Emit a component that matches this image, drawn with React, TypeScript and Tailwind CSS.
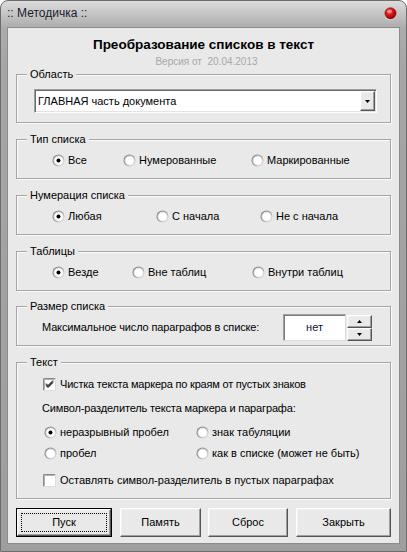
import React, { useId } from "react";

function Radio({ checked }: { checked?: boolean }) {
  const id = useId().replace(/:/g, "");
  return (
    <svg width="13" height="13" viewBox="0 0 13 13" className="shrink-0">
      <defs>
        <linearGradient id={"o" + id} x1="0" y1="0" x2="1" y2="1">
          <stop offset="0" stopColor="#7c7c7c" />
          <stop offset="0.5" stopColor="#9a9a9a" />
          <stop offset="1" stopColor="#f4f4f4" />
        </linearGradient>
        <linearGradient id={"i" + id} x1="0" y1="0" x2="1" y2="1">
          <stop offset="0" stopColor="#c4c4c4" />
          <stop offset="1" stopColor="#ffffff" />
        </linearGradient>
      </defs>
      <circle cx="6.5" cy="6.5" r="6" fill={`url(#o${id})`} />
      <circle cx="6.5" cy="6.5" r="5" fill={`url(#i${id})`} />
      <circle cx="6.5" cy="6.5" r="4" fill="#ffffff" />
      {checked && <circle cx="6.5" cy="6.5" r="2" fill="#000" />}
    </svg>
  );
}

function Check({ checked }: { checked?: boolean }) {
  return (
    <svg width="13" height="13" viewBox="0 0 13 13" className="shrink-0">
      <rect x="0" y="0" width="13" height="13" fill="#ffffff" />
      <path d="M0.5 12.5 V0.5 H12.5" stroke="#8a8a8a" fill="none" />
      <path d="M12.5 0.5 V12.5 H0.5" stroke="#dcdcdc" fill="none" />
      <path d="M1.5 11.5 V1.5 H11.5" stroke="#b0b0b0" fill="none" />
      {checked && (
        <path
          d="M3 5.5 L5 7.5 L10 2.5 M3 6.5 L5 8.5 L10 3.5 M3 7.5 L5 9.5 L10 4.5"
          stroke="#000"
          strokeWidth="1"
          fill="none"
        />
      )}
    </svg>
  );
}

function Option({
  label,
  checked,
  className,
}: {
  label: string;
  checked?: boolean;
  className?: string;
}) {
  return (
    <div className={"flex items-center gap-[3px] h-[14px] " + (className || "")}>
      <Radio checked={checked} />
      <span className="leading-[14px] whitespace-nowrap">{label}</span>
    </div>
  );
}

function Group({
  label,
  className,
  children,
}: {
  label: string;
  className?: string;
  children?: React.ReactNode;
}) {
  return (
    <div
      className={
        "flex flex-col border border-[#a5a5a5] shadow-[inset_1px_1px_0_#fbfbfb,1px_1px_0_#fbfbfb] " +
        (className || "")
      }
    >
      <span className="-mt-[8px] ml-[10px] self-start h-[14px] px-[3px] leading-[14px] bg-[#e9e9e9] whitespace-nowrap">
        {label}
      </span>
      {children}
    </div>
  );
}

const raised =
  "border border-t-[#ffffff] border-l-[#ffffff] border-b-[#555555] border-r-[#555555] shadow-[inset_-1px_-1px_0_#a0a0a0,inset_1px_1px_0_#f0f0f0] bg-[#e9e9e9]";

function Btn({
  label,
  className,
  def,
}: {
  label: string;
  className: string;
  def?: boolean;
}) {
  if (def) {
    return (
      <div className={"border border-black flex " + className}>
        <div className={"flex-1 flex p-[3px] " + raised}>
          <div className="flex-1 flex items-center justify-center border border-dotted border-black">
            {label}
          </div>
        </div>
      </div>
    );
  }
  return (
    <div className={"flex items-center justify-center " + raised + " " + className}>
      {label}
    </div>
  );
}

function SpinBtn({ up }: { up?: boolean }) {
  return (
    <div className={"w-[25px] h-[13px] flex items-center justify-center " + raised}>
      <svg width="5" height="3" viewBox="0 0 5 3">
        {up ? <path d="M2.5 0 L5 3 H0 Z" fill="#000" /> : <path d="M0 0 H5 L2.5 3 Z" fill="#000" />}
      </svg>
    </div>
  );
}

export default function App() {
  return (
    <div className="w-[407px] h-[552px] flex flex-col rounded-t-[8px] border border-[#6c6c6c] bg-[linear-gradient(to_bottom,#dcdcdc,#acacac_27px,#a6a6a6_60px,#9e9e9e)] font-['Liberation_Sans',Arial,sans-serif] text-[11px] text-black overflow-hidden">
      {/* title bar */}
      <div className="h-[26px] flex items-center justify-between pl-[6px] pr-[9px] shrink-0">
        <span className="text-[12px] text-[#1a1a2e] leading-[14px] -mt-[2px]">:: Методичка ::</span>
        <svg width="13" height="13" viewBox="0 0 13 13" className="-mt-[2px]">
          <defs>
            <radialGradient id="cl" cx="0.4" cy="0.35" r="0.65">
              <stop offset="0" stopColor="#ff7a7a" />
              <stop offset="0.45" stopColor="#e01818" />
              <stop offset="1" stopColor="#8a0000" />
            </radialGradient>
          </defs>
          <circle cx="6.5" cy="7" r="6" fill="#f2f2f2" opacity="0.8" />
          <circle cx="6.5" cy="6.3" r="5.6" fill="url(#cl)" stroke="#7a0a0a" strokeWidth="0.6" />
          <ellipse cx="5.6" cy="4.2" rx="2.6" ry="1.5" fill="#ffffff" opacity="0.35" />
        </svg>
      </div>

      {/* client area */}
      <div className="flex-1 mx-[6px] mb-[7px] border border-[#8c8c8c] bg-[#e9e9e9] flex flex-col px-[8px]">
        <div className="mt-[9px] h-[16px] leading-[16px] text-center font-bold text-[13.5px]">
          Преобразование списков в текст
        </div>
        <div className="mt-[2px] h-[14px] leading-[14px] text-center text-[10px] text-[#a8a8a8] pl-[6px]">
          Версия от&nbsp; 20.04.2013
        </div>

        {/* Область */}
        <Group label="Область" className="mt-[5px] h-[49px]">
          <div className="mt-[8px] ml-[17px] w-[343px] h-[24px] flex bg-white border border-t-[#a0a0a0] border-l-[#a0a0a0] border-b-white border-r-white shadow-[inset_1px_1px_0_#6a6a6a,inset_-1px_-1px_0_#e3e3e3]">
            <div className="flex-1 flex items-center pl-[3px]">ГЛАВНАЯ часть документа</div>
            <div className={"w-[15px] my-[1px] mr-[1px] flex items-center justify-center " + raised}>
              <svg width="5" height="3" viewBox="0 0 5 3">
                <path d="M0 0 H5 L2.5 3 Z" fill="#000" />
              </svg>
            </div>
          </div>
        </Group>

        {/* Тип списка */}
        <Group label="Тип списка" className="mt-[16px] h-[40px]">
          <div className="mt-[7px] ml-[35px] flex">
            <Option label="Все" checked className="w-[71px]" />
            <Option label="Нумерованные" className="w-[128px]" />
            <Option label="Маркированные" />
          </div>
        </Group>

        {/* Нумерация списка */}
        <Group label="Нумерация списка" className="mt-[16px] h-[40px]">
          <div className="mt-[7px] ml-[35px] flex">
            <Option label="Любая" checked className="w-[104px]" />
            <Option label="С начала" className="w-[104px]" />
            <Option label="Не с начала" />
          </div>
        </Group>

        {/* Таблицы */}
        <Group label="Таблицы" className="mt-[16px] h-[40px]">
          <div className="mt-[7px] ml-[35px] flex">
            <Option label="Везде" checked className="w-[80px]" />
            <Option label="Вне таблиц" className="w-[120px]" />
            <Option label="Внутри таблиц" />
          </div>
        </Group>

        {/* Размер списка */}
        <Group label="Размер списка" className="mt-[15px] h-[40px]">
          <div className="mt-[1px] flex items-center">
            <span className="ml-[25px] w-[241px] whitespace-nowrap tracking-[-0.15px]">
              Максимальное число параграфов в списке:
            </span>
            <div className="w-[63px] h-[27px] flex items-center justify-center bg-white border border-t-[#a0a0a0] border-l-[#a0a0a0] border-b-[#dcdcdc] border-r-[#dcdcdc] shadow-[inset_1px_1px_0_#7a7a7a] text-[#101040]">
              нет
            </div>
            <div className="ml-[1px] flex flex-col">
              <SpinBtn up />
              <SpinBtn />
            </div>
          </div>
        </Group>

        {/* Текст */}
        <Group label="Текст" className="mt-[16px] h-[137px]">
          <div className="mt-[8px] ml-[26px] flex items-center gap-[4px] h-[14px]">
            <Check checked />
            <span className="whitespace-nowrap tracking-[-0.2px]">Чистка текста маркера по краям от пустых знаков</span>
          </div>
          <div className="mt-[10px] ml-[25px] h-[14px] leading-[14px] whitespace-nowrap tracking-[-0.15px]">
            Символ-разделитель текста маркера и параграфа:
          </div>
          <div className="mt-[10px] ml-[27px] flex">
            <Option label="неразрывный пробел" checked className="w-[152px]" />
            <Option label="знак табуляции" />
          </div>
          <div className="mt-[7px] ml-[27px] flex">
            <Option label="пробел" className="w-[152px]" />
            <Option label="как в списке (может не быть)" />
          </div>
          <div className="mt-[13px] ml-[26px] flex items-center gap-[4px] h-[14px]">
            <Check />
            <span className="whitespace-nowrap">Оставлять символ-разделитель в пустых параграфах</span>
          </div>
        </Group>

        {/* buttons */}
        <div className="mt-[9px] flex">
          <Btn label="Пуск" def className="w-[96px] h-[29px]" />
          <Btn label="Память" className="ml-[8px] w-[81px] h-[29px]" />
          <Btn label="Сброс" className="ml-[7px] w-[80px] h-[29px]" />
          <Btn label="Закрыть" className="ml-[8px] w-[95px] h-[29px]" />
        </div>
      </div>
    </div>
  );
}
